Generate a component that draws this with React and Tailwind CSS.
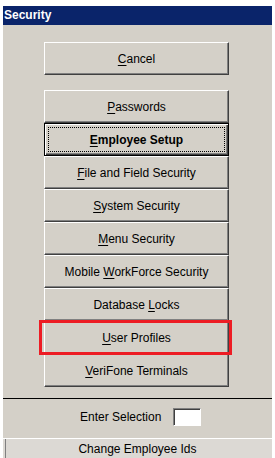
const FACE = 'bg-[#d4d0c8]';

function Key({ children }) {
  return <span className="underline decoration-1 underline-offset-2">{children}</span>;
}

function WinButton({ children, bold, isDefault, className = '' }) {
  if (isDefault) {
    return (
      <div
        className={`relative flex h-[33px] w-[185px] items-center justify-center border border-black ${FACE} shadow-[inset_1px_1px_0_#ffffff,inset_-1px_-1px_0_#404040,inset_-2px_-2px_0_#808080] ${className}`}
      >
        <div className="absolute inset-[3px] border border-dotted border-black" />
        <span className={`text-[12px] text-black ${bold ? 'font-bold' : ''}`}>{children}</span>
      </div>
    );
  }
  return (
    <div
      className={`relative flex h-[33px] w-[185px] items-center justify-center border-t border-l border-t-white border-l-white border-r border-b border-r-[#404040] border-b-[#404040] ${FACE} shadow-[inset_-1px_-1px_0_#808080] ${className}`}
    >
      <span className="text-[12px] text-black">{children}</span>
    </div>
  );
}

export default function App() {
  return (
    <div
      className="h-[458px] w-[275px] overflow-hidden bg-white pt-[6px] pl-[3px] pr-[3px]"
      style={{ fontFamily: '"Liberation Sans", Arial, sans-serif' }}
    >
      <div className={`flex h-[452px] flex-col ${FACE}`}>
        <div className="h-[19px] bg-[#0a246a] pl-[1px] text-[12px] font-bold leading-[19px] text-white">
          Security
        </div>

        <div className="mt-[17px] ml-[41px]">
          <WinButton className="h-[32px]">
            <Key>C</Key>ancel
          </WinButton>
        </div>

        <div className="mt-[15px] ml-[41px] flex flex-col items-start">
          <WinButton>
            <Key>P</Key>asswords
          </WinButton>
          <WinButton isDefault bold>
            <Key>E</Key>mployee Setup
          </WinButton>
          <WinButton>
            <Key>F</Key>ile and Field Security
          </WinButton>
          <WinButton>
            <Key>S</Key>ystem Security
          </WinButton>
          <WinButton>
            <Key>M</Key>enu Security
          </WinButton>
          <WinButton>
            Mobile <Key>W</Key>orkForce Security
          </WinButton>
          <WinButton>
            Database <Key>L</Key>ocks
          </WinButton>
          <div className="relative w-[185px]">
            <WinButton>
              <Key>U</Key>ser Profiles
            </WinButton>
            <div className="absolute top-[-1px] left-[-5px] right-[-3px] bottom-[-1px] z-10 border-[3px] border-[#ed1c24]" />
          </div>
          <WinButton>
            <Key>V</Key>eriFone Terminals
          </WinButton>
        </div>

        <div className="mt-[11px] h-px bg-black" />

        <div className="mt-[9px] flex items-center pl-[77px]">
          <span className="text-[12px] text-black">Enter Selection</span>
          <div className="ml-[12px] h-[18px] w-[28px] border-t border-l border-t-[#808080] border-l-[#808080] border-r border-b border-r-white border-b-white bg-white shadow-[inset_1px_1px_0_#404040]" />
        </div>

        <div className="mt-[12px] flex h-[20px] items-center justify-center border-t border-t-white bg-[#dcd9d4] shadow-[inset_2px_0_0_#dcd9d4,inset_3px_0_0_#808080]">
          <span className="text-[12px] text-black">Change Employee Ids</span>
        </div>
      </div>
    </div>
  );
}
